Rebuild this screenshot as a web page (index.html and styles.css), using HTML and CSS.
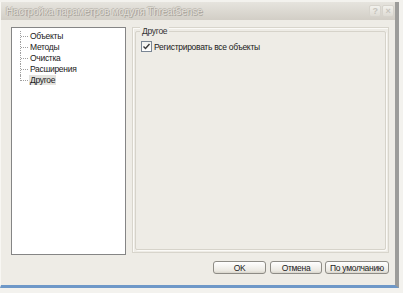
FILE: index.html
```html
<html>
<head>
    <title>ThreatSense</title>
    <link rel="stylesheet" href="styles.css">
</head>
<body>
<div class="window">
    <div class="titleBar">
        <span class="titleText">Настройка параметров модуля ThreatSense</span>
        <div class="titleButtons">
            <span class="tbtn">?</span>
            <span class="tbtn">&times;</span>
        </div>
    </div>

    <div class="content">
        <div class="mainRow">
            <ul class="tree">
                <li><span>Объекты</span></li>
                <li><span>Методы</span></li>
                <li><span>Очистка</span></li>
                <li><span>Расширения</span></li>
                <li class="last"><span class="selected">Другое</span></li>
            </ul>

            <div class="panel">
                <div class="groupBox">
                    <div class="legend">Другое</div>
                    <label class="check">
                        <span class="box">
                            <svg width="9" height="9" viewBox="0 0 9 9"><path d="M1.5 4.5 L3.5 6.5 L7.5 2" fill="none" stroke="#3a3a3a" stroke-width="1.4"/></svg>
                        </span>
                        Регистрировать все объекты
                    </label>
                </div>
            </div>
        </div>

        <div class="buttonRow">
            <button class="btn ok">OK</button>
            <button class="btn cancel">Отмена</button>
            <button class="btn wide">По умолчанию</button>
        </div>
    </div>
</div>
</body>
</html>
```

FILE: styles.css
```css
body{
    margin:0;
    width:403px;
    height:293px;
    background-color:#f3f2ee;
    font-family:"Liberation Sans", Arial, sans-serif;
    font-size:8.5px;
    letter-spacing:-0.3px;
    color:#1a1a1a;
    overflow:hidden;
}

.window{
    margin-top:2px;
    width:399px;
    height:286px;
    background-color:#eeece6;
    border-right:4px solid #9c9c9a;
    border-bottom:3px solid #6e98c8;
    box-sizing:border-box;
    display:flex;
    flex-direction:column;
    border-left:1px solid #f8f7f3;
}

.titleBar{
    height:18px;
    background:linear-gradient(#e6e4de, #d2cec6);
    display:flex;
    align-items:center;
    justify-content:space-between;
    padding-left:5px;
    padding-right:1px;
}

.titleText{
    font-size:10px;
    letter-spacing:-0.2px;
    color:#e2dfd8;
    text-shadow:1px 1px #a9a59d, -1px 0 #bcb8b0, 0 -1px #c2beb6;
}

.titleButtons{
    display:flex;
    gap:1px;
}

.tbtn{
    width:12px;
    height:12px;
    border:1px solid #d6d3cc;
    border-radius:2px;
    background:linear-gradient(#f2f1ed, #dedbd4);
    color:#c6c3bc;
    font-size:9px;
    font-weight:bold;
    display:flex;
    align-items:center;
    justify-content:center;
    box-sizing:border-box;
}

.content{
    flex:1;
    padding:7px 6px 10px 10px;
    display:flex;
    flex-direction:column;
}

.mainRow{
    display:flex;
    gap:6px;
    height:228px;
}

.tree{
    width:116px;
    margin:0;
    padding:3px 0 0 0;
    list-style-type:none;
    background-color:#ffffff;
    border:1px solid #858585;
    box-sizing:border-box;
}

.tree li{
    height:11px;
    line-height:11px;
    padding-left:17px;
    position:relative;
}

.tree li::before{
    content:"";
    position:absolute;
    left:8px;
    top:0;
    height:11px;
    border-left:1px dotted #a0a0a0;
}

.tree li.last::before{
    height:6px;
}

.tree li::after{
    content:"";
    position:absolute;
    left:9px;
    top:5px;
    width:7px;
    border-top:1px dotted #a0a0a0;
}

.tree span{
    padding:0 1px;
}

.selected{
    background-color:#e4e3df;
}

.panel{
    width:259px;
    height:226px;
    border:1px solid #d8d5cc;
    box-shadow:inset 1px 1px #fbfaf7;
    box-sizing:border-box;
    padding:3px 2px 2px 2px;
}

.groupBox{
    height:100%;
    border:1px solid #d6d3ca;
    box-shadow:1px 1px #fbfaf7;
    border-radius:2px;
    box-sizing:border-box;
    position:relative;
    padding:8px 5px;
}

.legend{
    position:absolute;
    top:-6px;
    left:4px;
    padding:0 2px;
    background-color:#eeece6;
    color:#333333;
}

.check{
    display:flex;
    align-items:center;
    gap:2px;
    margin-top:1px;
}

.box{
    width:11px;
    height:11px;
    border:1px solid #7a8694;
    background:linear-gradient(#f2f2ee, #ffffff);
    box-sizing:border-box;
    display:flex;
    align-items:center;
    justify-content:center;
}

.buttonRow{
    display:flex;
    justify-content:flex-end;
    margin-top:auto;
    margin-bottom:1px;
}

.btn{
    width:53px;
    height:13px;
    padding:0;
    margin-left:4px;
    font-family:"Liberation Sans", Arial, sans-serif;
    font-size:8.5px;
    letter-spacing:-0.3px;
    color:#1a1a1a;
    border:1px solid #8e8c86;
    border-radius:3px;
    background:linear-gradient(#ffffff, #ebe9e2 80%, #d8d5cc);
}

.btn.cancel{
    width:52px;
}

.btn.wide{
    width:64px;
    margin-left:3px;
}
```
